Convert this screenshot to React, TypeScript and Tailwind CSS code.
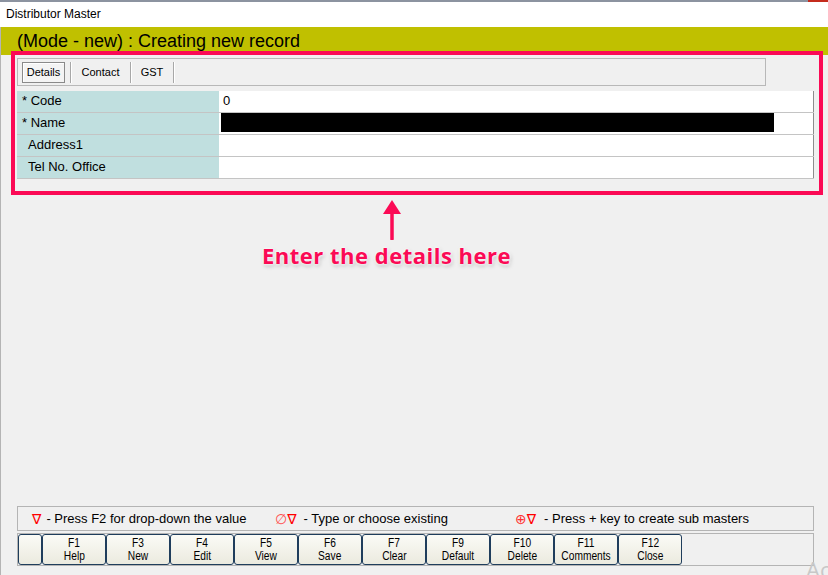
import React from 'react';

const fields = [
  { label: '* Code', indent: false, value: '0' },
  { label: '* Name', indent: false, value: '', redacted: true },
  { label: 'Address1', indent: true, value: '' },
  { label: 'Tel No. Office', indent: true, value: '' },
];

const keys = [
  ['F1', 'Help'],
  ['F3', 'New'],
  ['F4', 'Edit'],
  ['F5', 'View'],
  ['F6', 'Save'],
  ['F7', 'Clear'],
  ['F9', 'Default'],
  ['F10', 'Delete'],
  ['F11', 'Comments'],
  ['F12', 'Close'],
];

function KeyButton({ top, bottom, w = 'w-[64px]' }: { top?: string; bottom?: string; w?: string }) {
  return (
    <div
      className={`${w} h-full flex flex-col items-center justify-center border border-[#1f3d5c] rounded-[3px] bg-gradient-to-b from-[#fbfbf6] to-[#ebeadf] text-[12px] leading-[13px] text-black`}
    >
      {top && <span className="[transform:scaleX(0.85)]">{top}</span>}
      {bottom && <span className="[transform:scaleX(0.85)] whitespace-nowrap">{bottom}</span>}
    </div>
  );
}

export default function App() {
  return (
    <div className="relative w-[828px] h-[575px] overflow-hidden bg-[#f0f0f0] flex flex-col font-['Liberation_Sans',Arial,sans-serif] text-black">
      {/* window title */}
      <div className="relative h-[27px] shrink-0 bg-white border-t-2 border-[#8c93a0] flex items-center pl-[6px] text-[12px]">
        <span className="-mt-[2px]">Distributor Master</span>
        <div className="absolute right-0 -top-[2px] w-[20px] h-[2px] bg-[#c42b1c]" />
      </div>

      <div className="flex-1 flex flex-col border-l border-[#b4b4b4]">
        {/* mode banner */}
        <div className="h-[28px] shrink-0 bg-[#c0c000] pl-[16px] pt-[3px] text-[18px] leading-[22px]">
          (Mode - new) : Creating new record
        </div>

        {/* highlighted form area */}
        <div className="relative -mt-[4px] ml-[10px] w-[812px] h-[144px] border-4 border-[#fb0a55] bg-[#f0f0f0] pl-[2px] pt-[3px]">
          {/* tab strip */}
          <div className="w-[749px] h-[28px] border border-[#b8b8b8] flex items-center text-[11px]">
            <div className="w-[53px] h-[21px] pl-[4px] border-r border-[#a8a8a8] shadow-[1px_0_0_#fff]">
              <div className="w-[43px] h-[21px] border border-[#8a8a8a] bg-[#f4f4f4] shadow-[inset_1px_1px_0_#fff] flex items-center justify-center">
                Details
              </div>
            </div>
            <div className="w-[60px] h-[21px] flex items-center justify-center border-r border-[#a8a8a8] shadow-[1px_0_0_#fff]">
              Contact
            </div>
            <div className="w-[43px] h-[21px] flex items-center justify-center border-r border-[#a8a8a8] shadow-[1px_0_0_#fff]">
              GST
            </div>
          </div>

          {/* field grid */}
          <div className="mt-[5px] w-[797px] text-[13px]">
            {fields.map((f) => (
              <div key={f.label} className="flex h-[22px] border-b border-[#c4c4c4]">
                <div className={`w-[202px] bg-[#c0dfdf] flex items-center pb-[2px] ${f.indent ? 'pl-[11px]' : 'pl-[5px]'}`}>
                  {f.label}
                </div>
                <div className="w-[2px] bg-white" />
                <div className={`flex-1 bg-white border-r border-[#8c8c8c] flex items-center pb-[2px] ${f.redacted ? '' : 'pl-[2px]'}`}>
                  {f.redacted ? <div className="w-[553px] h-full bg-black" /> : f.value}
                </div>
              </div>
            ))}
          </div>
        </div>

        {/* annotation */}
        <div className="flex-1">
          <svg width="20" height="40" viewBox="0 0 20 40" className="ml-[381px] mt-[5px]">
            <path d="M10 13 V39" stroke="#fb0a55" strokeWidth="3.5" strokeLinecap="round" />
            <path d="M10 0 L19 14 L1 14 Z" fill="#fb0a55" />
          </svg>
          <div className="ml-[261px] mt-[1px] text-[22px] leading-[28px] font-bold font-['Open_Sans',sans-serif] text-[#fb0a55] tracking-[0.5px] [text-shadow:0_0_3px_#fff,0_0_3px_#fff,1px_2px_4px_rgba(0,0,0,0.25)]">
            Enter the details here
          </div>
        </div>

        {/* legend */}
        <div className="ml-[16px] w-[797px] h-[25px] border border-[#b4b4b4] flex items-center text-[13px] shrink-0">
          <div className="w-[257px] pl-[14px] flex items-center gap-[5px]">
            <span className="text-[#ff0000] font-['DejaVu_Sans',sans-serif] text-[14px] leading-none">∇</span>
            <span>- Press F2 for drop-down the value</span>
          </div>
          <div className="w-[240px] flex items-center gap-[7px]">
            <span className="font-['DejaVu_Sans',sans-serif] text-[14px] leading-none">
              <span className="text-[#ff5050]">∅</span>
              <span className="text-[#ff0000]">∇</span>
            </span>
            <span>- Type or choose existing</span>
          </div>
          <div className="flex items-center gap-[8px]">
            <span className="font-['DejaVu_Sans',sans-serif] text-[14px] leading-none">
              <span className="text-[#ff3030]">⊕</span>
              <span className="text-[#ff0000]">∇</span>
            </span>
            <span>- Press + key to create sub masters</span>
          </div>
        </div>

        {/* function keys */}
        <div className="mt-[2px] mb-[9px] ml-[16px] w-[797px] h-[33px] border border-[#b4b4b4] flex shrink-0">
          <KeyButton w="w-[24px]" />
          {keys.map(([k, label]) => (
            <KeyButton key={k} top={k} bottom={label} />
          ))}
        </div>
      </div>

      {/* os watermark */}
      <div className="absolute left-[806px] top-[553px] text-[22px] text-[#c8c8c8] font-['Open_Sans',sans-serif]">
        Ac
      </div>
    </div>
  );
}
